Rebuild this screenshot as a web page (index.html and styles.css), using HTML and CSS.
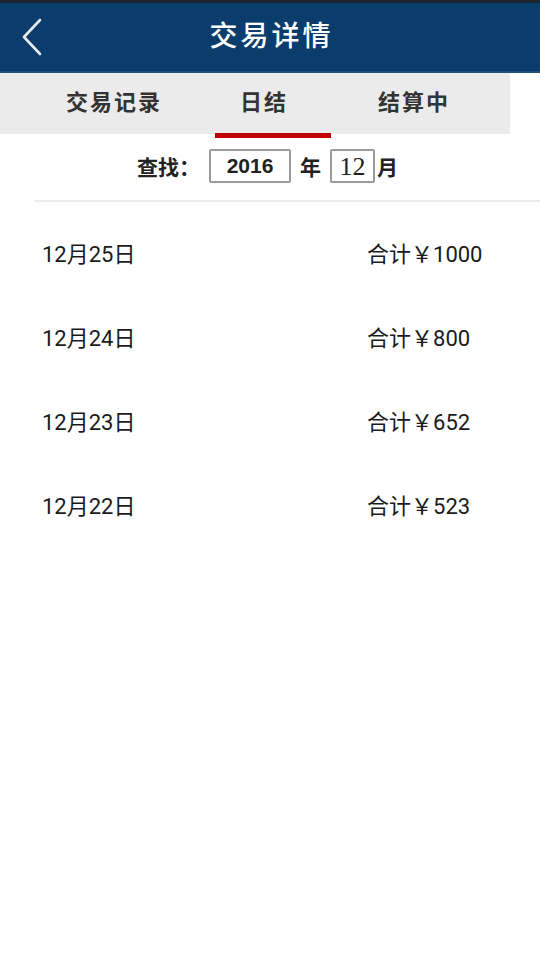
FILE: index.html
```html
<!DOCTYPE html>
<html lang="zh">
<head>
<meta charset="utf-8">
<title>交易详情</title>
<link rel="stylesheet" href="styles.css">
</head>
<body>
<div class="app">
  <header class="topbar">
    <div class="topbar-inner">
      <svg class="back" width="24" height="38" viewBox="0 0 24 38"><path d="M20 2 L4 19 L20 36" fill="none" stroke="#e6e9ee" stroke-width="2.6" stroke-linecap="round" stroke-linejoin="round"/></svg>
      <h1 class="title">交易详情</h1>
    </div>
  </header>
  <nav class="tabs">
    <div class="tab">交易记录</div>
    <div class="tab active">日结</div>
    <div class="tab">结算中</div>
  </nav>
  <div class="search">
    <span class="label">查找：</span>
    <span class="box year">2016</span>
    <span class="unit">年</span>
    <span class="box month">12</span><span class="unit m">月</span>
  </div>
  <ul class="list">
    <li class="row"><span class="date">12月25日</span><span class="sum">合计<span class="yen">￥</span>1000</span></li>
    <li class="row"><span class="date">12月24日</span><span class="sum">合计<span class="yen">￥</span>800</span></li>
    <li class="row"><span class="date">12月23日</span><span class="sum">合计<span class="yen">￥</span>652</span></li>
    <li class="row"><span class="date">12月22日</span><span class="sum">合计<span class="yen">￥</span>523</span></li>
  </ul>
</div>
</body>
</html>
```
FILE: styles.css
```css
* { box-sizing: border-box; }
html, body { margin: 0; padding: 0; background: #fff; }
body { font-family: Roboto, "Noto Sans CJK SC", sans-serif; color: #1a1a1a; }
.app { width: 540px; height: 960px; overflow: hidden; }

.topbar { height: 73px; background: #0a3c6c; border-top: 3px solid #1b2531; border-bottom: 2px solid #245080; }
.topbar-inner { position: relative; height: 68px; display: flex; align-items: center; justify-content: center; padding-bottom: 6px; }
.back { position: absolute; left: 20px; top: 15px; }
.title { margin: 0; font-size: 28px; line-height: 1; font-weight: 500; color: #fff; letter-spacing: 3px; font-family: "Noto Sans CJK SC", sans-serif; padding-left: 3px; }

.tabs { height: 61px; width: 510px; background: #ebebeb; display: flex; padding-left: 39px; }
.tab { width: 150px; display: flex; align-items: center; justify-content: center; padding-bottom: 7px; font-family: "Noto Sans CJK SC", sans-serif; font-size: 22px; font-weight: 700; color: #333; letter-spacing: 2px; position: relative; }
.tab.active::after { content: ""; position: absolute; left: 26px; width: 116px; bottom: -4px; height: 5px; background: #c00000; }

.search { height: 68px; margin-left: 34px; border-bottom: 2px solid #ececec; display: flex; align-items: center; padding-left: 103px; padding-bottom: 3px; font-family: "Noto Sans CJK SC", sans-serif; font-size: 21px; font-weight: 700; color: #222; }
.label { width: 72px; }
.box { height: 34px; border: 2px solid #9a9a9a; border-radius: 2px; display: flex; align-items: center; justify-content: center; }
.year { width: 82px; font-family: "Liberation Sans", sans-serif; font-size: 21px; font-weight: 700; }
.unit { margin: 0 9px 0 9px; }
.unit.m { margin-left: 2px; }
.month { width: 45px; font-family: "Liberation Serif", serif; font-weight: 400; font-size: 26px; padding-top: 2px; }

.list { list-style: none; margin: 0; padding: 8px 0 0 0; }
.row { height: 84px; display: flex; align-items: center; font-size: 22px; font-weight: 400; color: #1a1a1a; }
.date { width: 367px; padding-left: 42px; }
.yen { font-family: "Liberation Serif", "Noto Sans CJK SC", serif; }
```
